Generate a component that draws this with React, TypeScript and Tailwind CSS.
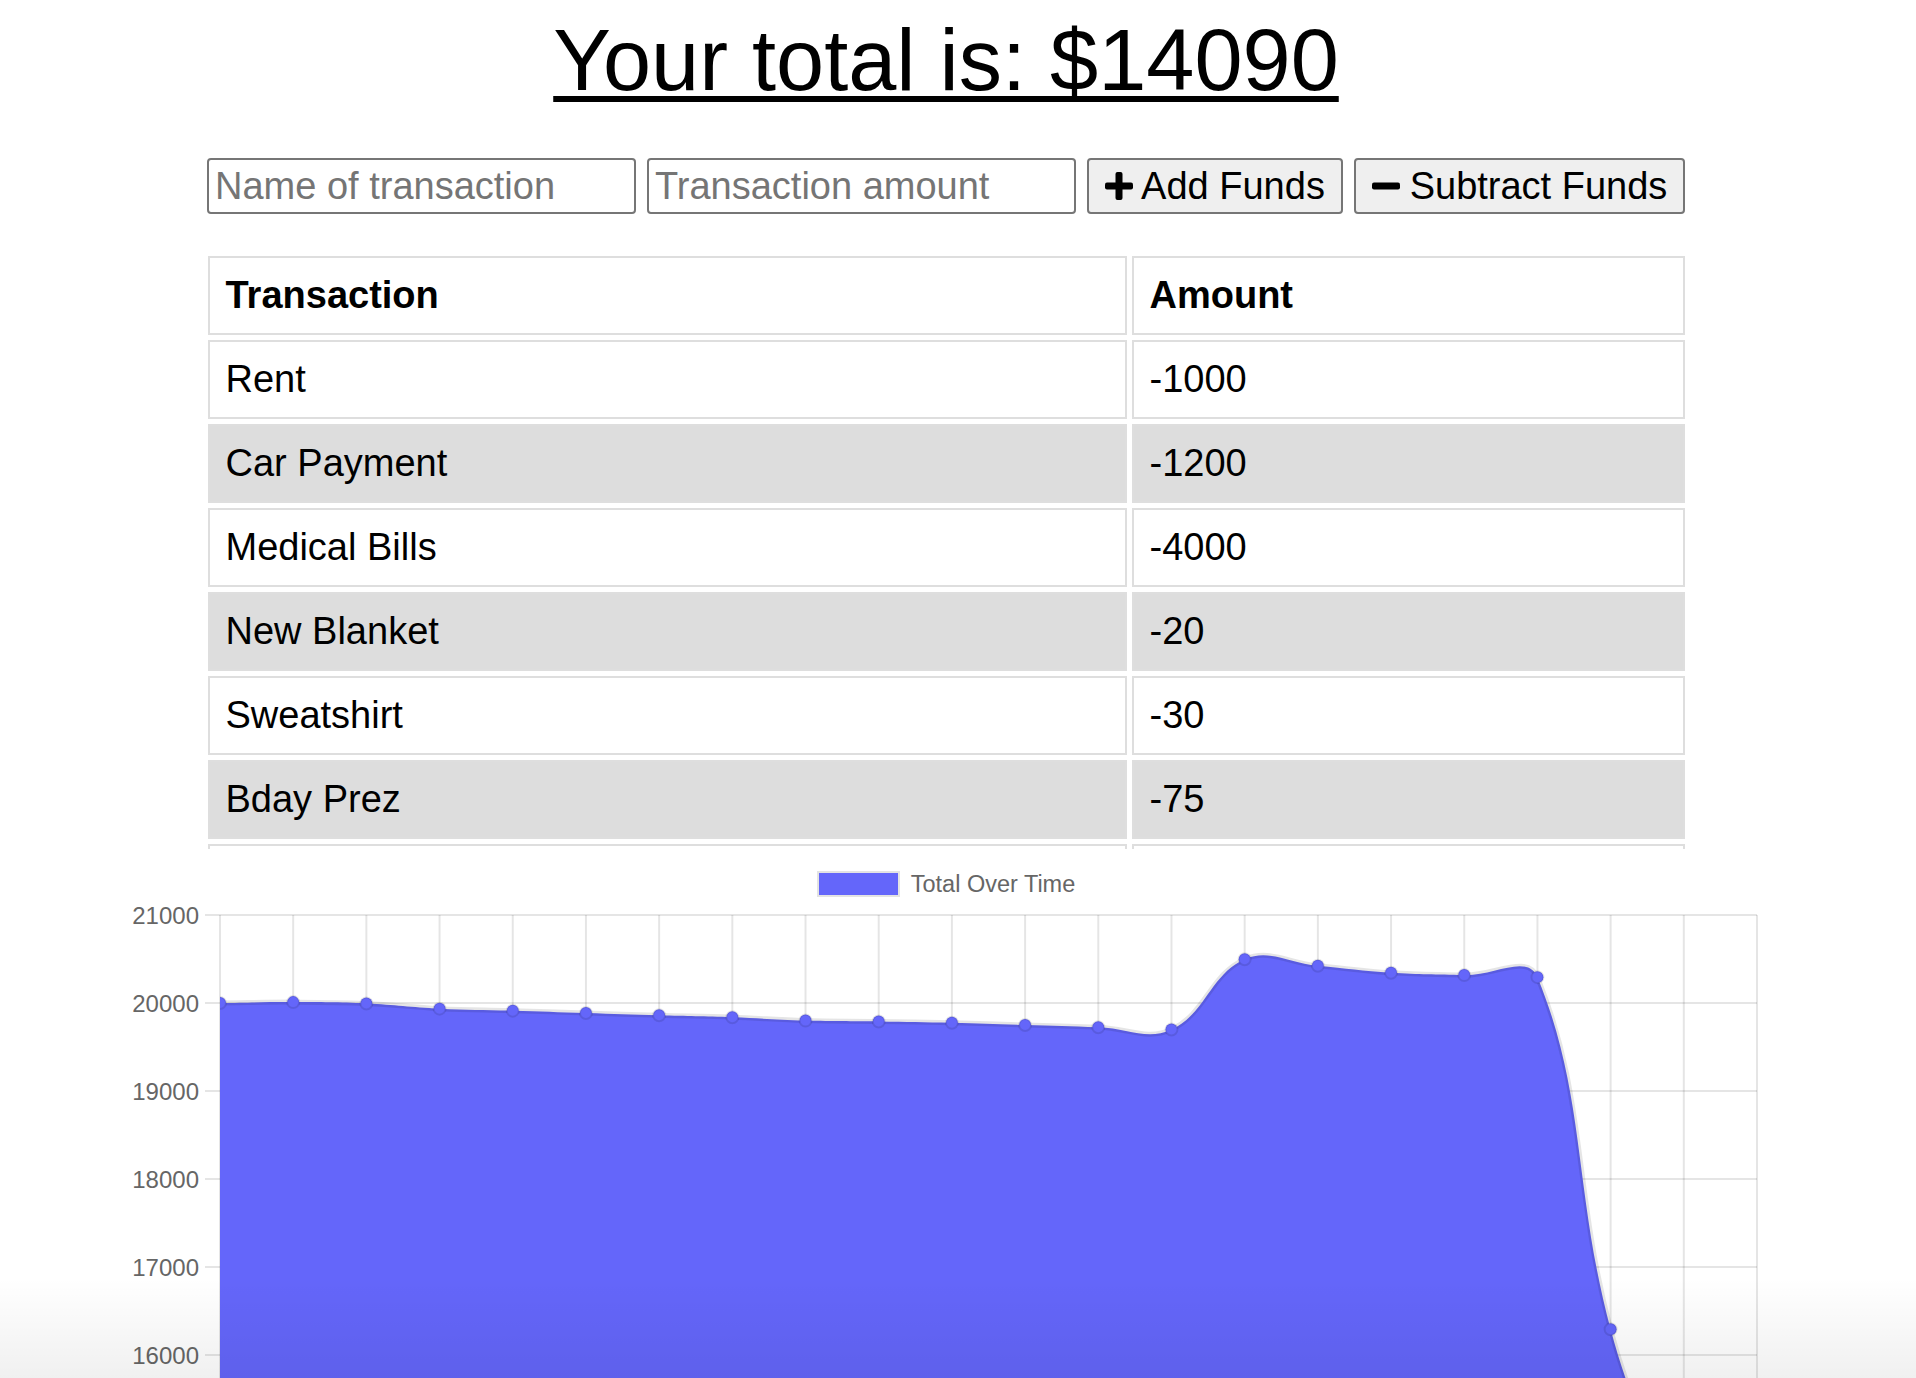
const rows = [
  ["Rent", "-1000"],
  ["Car Payment", "-1200"],
  ["Medical Bills", "-4000"],
  ["New Blanket", "-20"],
  ["Sweatshirt", "-30"],
  ["Bday Prez", "-75"],
  ["", ""],
];

// total over time, newest on the right
const totals = [
  20000, 20010, 19995, 19936, 19913, 19887, 19860, 19838, 19800, 19790, 19775,
  19750, 19725, 19698, 20498, 20423, 20343, 20317, 20294, 16292, 14090,
];

const LEFT = 220;
const RIGHT = 1757;
const STEP = (RIGHT - LEFT) / 21;
const toY = (v: number) => 106 - (v - 20000) * 0.088;

type Pt = { x: number; y: number };

// same spline as chart.js (tension 0.4)
function ctrl(prev: Pt, cur: Pt, next: Pt, t = 0.4) {
  const d01 = Math.hypot(cur.x - prev.x, cur.y - prev.y);
  const d12 = Math.hypot(next.x - cur.x, next.y - cur.y);
  let s01 = d01 / (d01 + d12);
  let s12 = d12 / (d01 + d12);
  if (isNaN(s01)) s01 = 0;
  if (isNaN(s12)) s12 = 0;
  const fa = t * s01;
  const fb = t * s12;
  return {
    p: { x: cur.x - fa * (next.x - prev.x), y: cur.y - fa * (next.y - prev.y) },
    n: { x: cur.x + fb * (next.x - prev.x), y: cur.y + fb * (next.y - prev.y) },
  };
}

function linePath(pts: Pt[]) {
  const c = pts.map((pt, i) =>
    ctrl(pts[i - 1] ?? pt, pt, pts[i + 1] ?? pt)
  );
  let d = `M${pts[0].x},${pts[0].y}`;
  for (let i = 1; i < pts.length; i++) {
    const a = c[i - 1].n;
    const b = c[i].p;
    d += ` C${a.x},${a.y} ${b.x},${b.y} ${pts[i].x},${pts[i].y}`;
  }
  return d;
}

function PlusIcon() {
  return (
    <svg width="28" height="28" viewBox="0 0 28 28" className="shrink-0">
      <rect x="10.5" y="0" width="7" height="28" rx="2" fill="#000" />
      <rect x="0" y="10.5" width="28" height="7" rx="2" fill="#000" />
    </svg>
  );
}

function MinusIcon() {
  return (
    <svg width="28" height="28" viewBox="0 0 28 28" className="shrink-0">
      <rect x="0" y="10.5" width="28" height="7" rx="2" fill="#000" />
    </svg>
  );
}

function Chart() {
  const pts = totals.map((v, i) => ({ x: LEFT + i * STEP, y: toY(v) }));
  const line = linePath(pts);
  const last = pts[pts.length - 1];
  const area = `${line} L${last.x},700 L${pts[0].x},700 Z`;
  const ticks = [21000, 20000, 19000, 18000, 17000, 16000];

  return (
    <div className="pt-[22px]">
      {/* Legend */}
      <div className="flex items-center justify-center gap-[11px] h-[26px]">
        <span className="w-[83px] h-[26px] bg-[#6466fa] border-2 border-[#e3e3e3]" />
        <span className="text-[23.5px] text-[#666666] leading-none">
          Total Over Time
        </span>
      </div>

      <svg width="1892" height="481" viewBox="0 0 1892 481" className="block">
        <defs>
          <clipPath id="plot">
            <rect x={LEFT} y={0} width={RIGHT - LEFT} height={700} />
          </clipPath>
        </defs>

        {Array.from({ length: 22 }, (_, i) => (
          <line
            key={i}
            x1={LEFT + i * STEP}
            x2={LEFT + i * STEP}
            y1={18}
            y2={481}
            stroke="rgba(0,0,0,0.1)"
            strokeWidth={2}
          />
        ))}
        {ticks.map((t) => (
          <g key={t}>
            <line
              x1={205}
              x2={RIGHT}
              y1={toY(t)}
              y2={toY(t)}
              stroke="rgba(0,0,0,0.1)"
              strokeWidth={2}
            />
            <text
              x={199}
              y={toY(t)}
              textAnchor="end"
              dominantBaseline="central"
              fontSize={24}
              fill="#666666"
              fontFamily="'Liberation Sans', Arial, sans-serif"
            >
              {t}
            </text>
          </g>
        ))}

        <g clipPath="url(#plot)">
          <path d={area} fill="#6466fa" />
          <path d={line} fill="none" stroke="rgba(0,0,0,0.1)" strokeWidth={5} />
          {pts.map((pt, i) => (
            <circle
              key={i}
              cx={pt.x}
              cy={pt.y}
              r={6}
              fill="#6466fa"
              stroke="rgba(0,0,0,0.1)"
              strokeWidth={2}
            />
          ))}
        </g>
      </svg>
    </div>
  );
}

export default function App() {
  return (
    <div className="relative h-[1378px] overflow-hidden bg-white font-['Liberation_Sans',Arial,sans-serif] text-black">
      <div className="w-[1892px] flex flex-col items-center">
        {/* Total */}
        <h1 className="mt-[11px] text-[86.5px] leading-[1.15] font-normal underline decoration-[6px] underline-offset-[6px]">
          Your total is: $14090
        </h1>

        {/* Form */}
        <div className="mt-[48px] flex gap-[11px]">
          <input
            type="text"
            placeholder="Name of transaction"
            className="w-[429px] h-[56px] border-2 border-[#767676] rounded-[4px] px-[6px] text-[38px] placeholder:text-[#757575] outline-none"
          />
          <input
            type="number"
            placeholder="Transaction amount"
            className="w-[429px] h-[56px] border-2 border-[#767676] rounded-[4px] px-[6px] text-[38px] placeholder:text-[#757575] outline-none"
          />
          <button className="w-[256px] h-[56px] flex items-center justify-center gap-[8px] bg-[#efefef] border-2 border-[#767676] rounded-[4px] text-[38px]">
            <PlusIcon />
            Add Funds
          </button>
          <button className="w-[331px] h-[56px] flex items-center justify-center gap-[10px] bg-[#efefef] border-2 border-[#767676] rounded-[4px] text-[38px]">
            <MinusIcon />
            Subtract Funds
          </button>
        </div>

        {/* Transactions */}
        <div className="mt-[37px] h-[598px] overflow-hidden">
          <table className="w-[1487px] table-fixed border-separate border-spacing-[5.4px] text-[38px]">
            <thead>
              <tr>
                <th className="w-[919px] h-[79px] border-2 border-[#dedede] px-[16px] text-left font-bold">
                  Transaction
                </th>
                <th className="h-[79px] border-2 border-[#dedede] px-[16px] text-left font-bold">
                  Amount
                </th>
              </tr>
            </thead>
            <tbody>
              {rows.map(([name, amount], i) => (
                <tr key={i} className={i % 2 === 1 ? "bg-[#dddddd]" : ""}>
                  <td className="h-[79px] border-2 border-[#dedede] px-[16px]">{name}</td>
                  <td className="h-[79px] border-2 border-[#dedede] px-[16px]">{amount}</td>
                </tr>
              ))}
            </tbody>
          </table>
        </div>

        <Chart />
      </div>

      <div className="pointer-events-none absolute bottom-0 left-0 right-0 h-[100px] bg-gradient-to-b from-transparent to-[rgba(0,0,0,0.06)]" />
    </div>
  );
}
